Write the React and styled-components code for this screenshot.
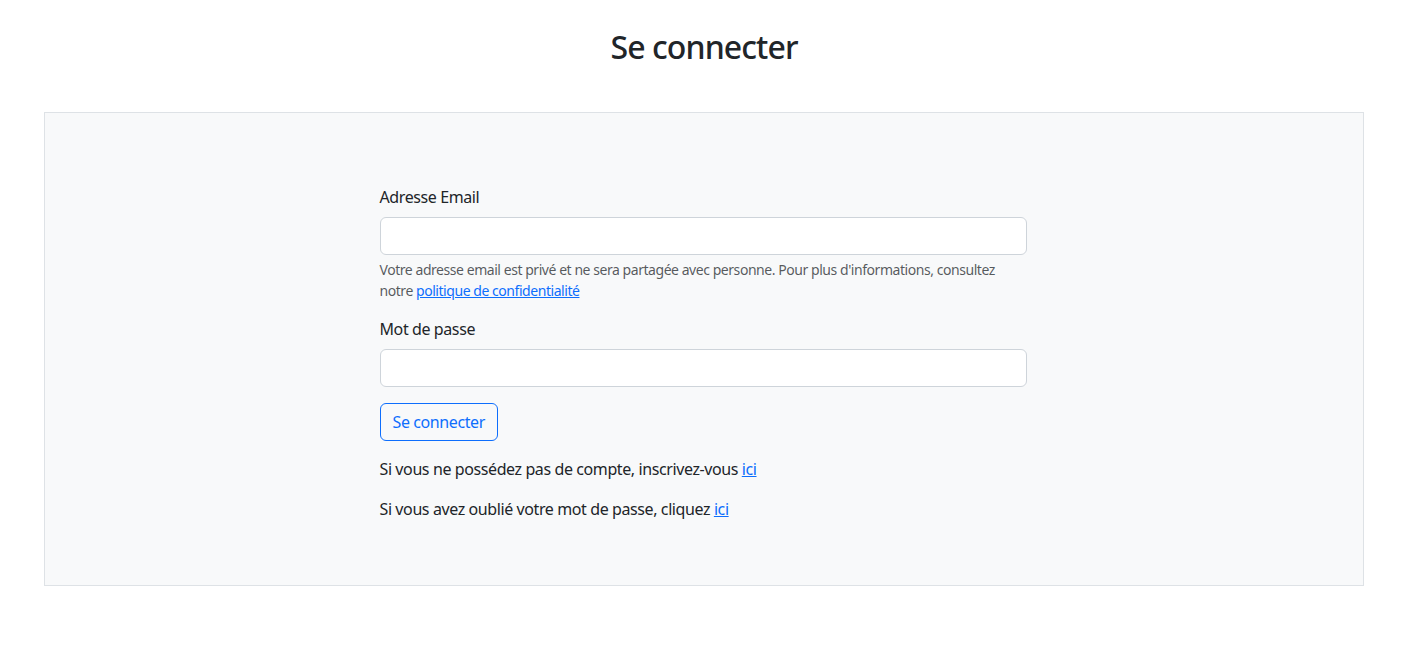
import React from "react";
import styled, { createGlobalStyle } from "styled-components";

const Global = createGlobalStyle`
  * { box-sizing: border-box; }
  html, body { margin: 0; padding: 0; background: #fff; }
  body {
    font-family: "Noto Sans", "Open Sans", sans-serif;
    font-size: 16px;
    line-height: 1.5;
    color: #212529;
    letter-spacing: -0.4px;
  }
`;

const Page = styled.div`
  display: flex;
  flex-direction: column;
  padding: 0 64px 0 44px;
`;

const Title = styled.h2`
  margin: 28px 0 46px;
  text-align: center;
  font-size: 32px;
  font-weight: 500;
  line-height: 1.2;
  letter-spacing: -0.9px;
  color: #212529;
`;

const Panel = styled.section`
  width: 1320px;
  background: #f8f9fa;
  border: 1px solid #dee2e6;
  padding: 72px 2px 48px 0;
  display: flex;
  justify-content: center;
`;

const Form = styled.form`
  width: 647px;
  display: flex;
  flex-direction: column;
`;

const Field = styled.div`
  display: flex;
  flex-direction: column;
  margin-bottom: 16px;
`;

const Label = styled.label`
  margin-bottom: 8px;
  font-size: 16px;
  line-height: 24px;
`;

const Input = styled.input`
  height: 38px;
  padding: 6px 12px;
  font: inherit;
  color: #212529;
  background: #fff;
  border: 1px solid #ced4da;
  border-radius: 6px;
  outline: none;
`;

const Help = styled.div`
  margin-top: 4px;
  font-size: 14px;
  line-height: 21px;
  letter-spacing: -0.45px;
  color: rgba(33, 37, 41, 0.75);
`;

const Link = styled.a`
  color: #0d6efd;
  text-decoration: underline;
`;

const Button = styled.button`
  align-self: flex-start;
  height: 38px;
  padding: 6px 12px;
  font: inherit;
  letter-spacing: -0.4px;
  color: #0d6efd;
  background: transparent;
  border: 1px solid #0d6efd;
  border-radius: 6px;
  margin-bottom: 16px;
  cursor: pointer;
`;

const Para = styled.p`
  margin: 0 0 16px;
  font-size: 16px;
  line-height: 24px;
`;

export default function App() {
  return (
    <>
      <Global />
      <Page>
        <Title>Se connecter</Title>
        <Panel>
          <Form onSubmit={(e) => e.preventDefault()}>
            <Field>
              <Label htmlFor="email">Adresse Email</Label>
              <Input id="email" type="email" />
              <Help>
                Votre adresse email est privé et ne sera partagée avec personne. Pour plus d'informations, consultez
                notre <Link href="#">politique de confidentialité</Link>
              </Help>
            </Field>
            <Field>
              <Label htmlFor="pwd">Mot de passe</Label>
              <Input id="pwd" type="password" />
            </Field>
            <Button type="submit">Se connecter</Button>
            <Para>
              Si vous ne possédez pas de compte, inscrivez-vous <Link href="#">ici</Link>
            </Para>
            <Para>
              Si vous avez oublié votre mot de passe, cliquez <Link href="#">ici</Link>
            </Para>
          </Form>
        </Panel>
      </Page>
    </>
  );
}
